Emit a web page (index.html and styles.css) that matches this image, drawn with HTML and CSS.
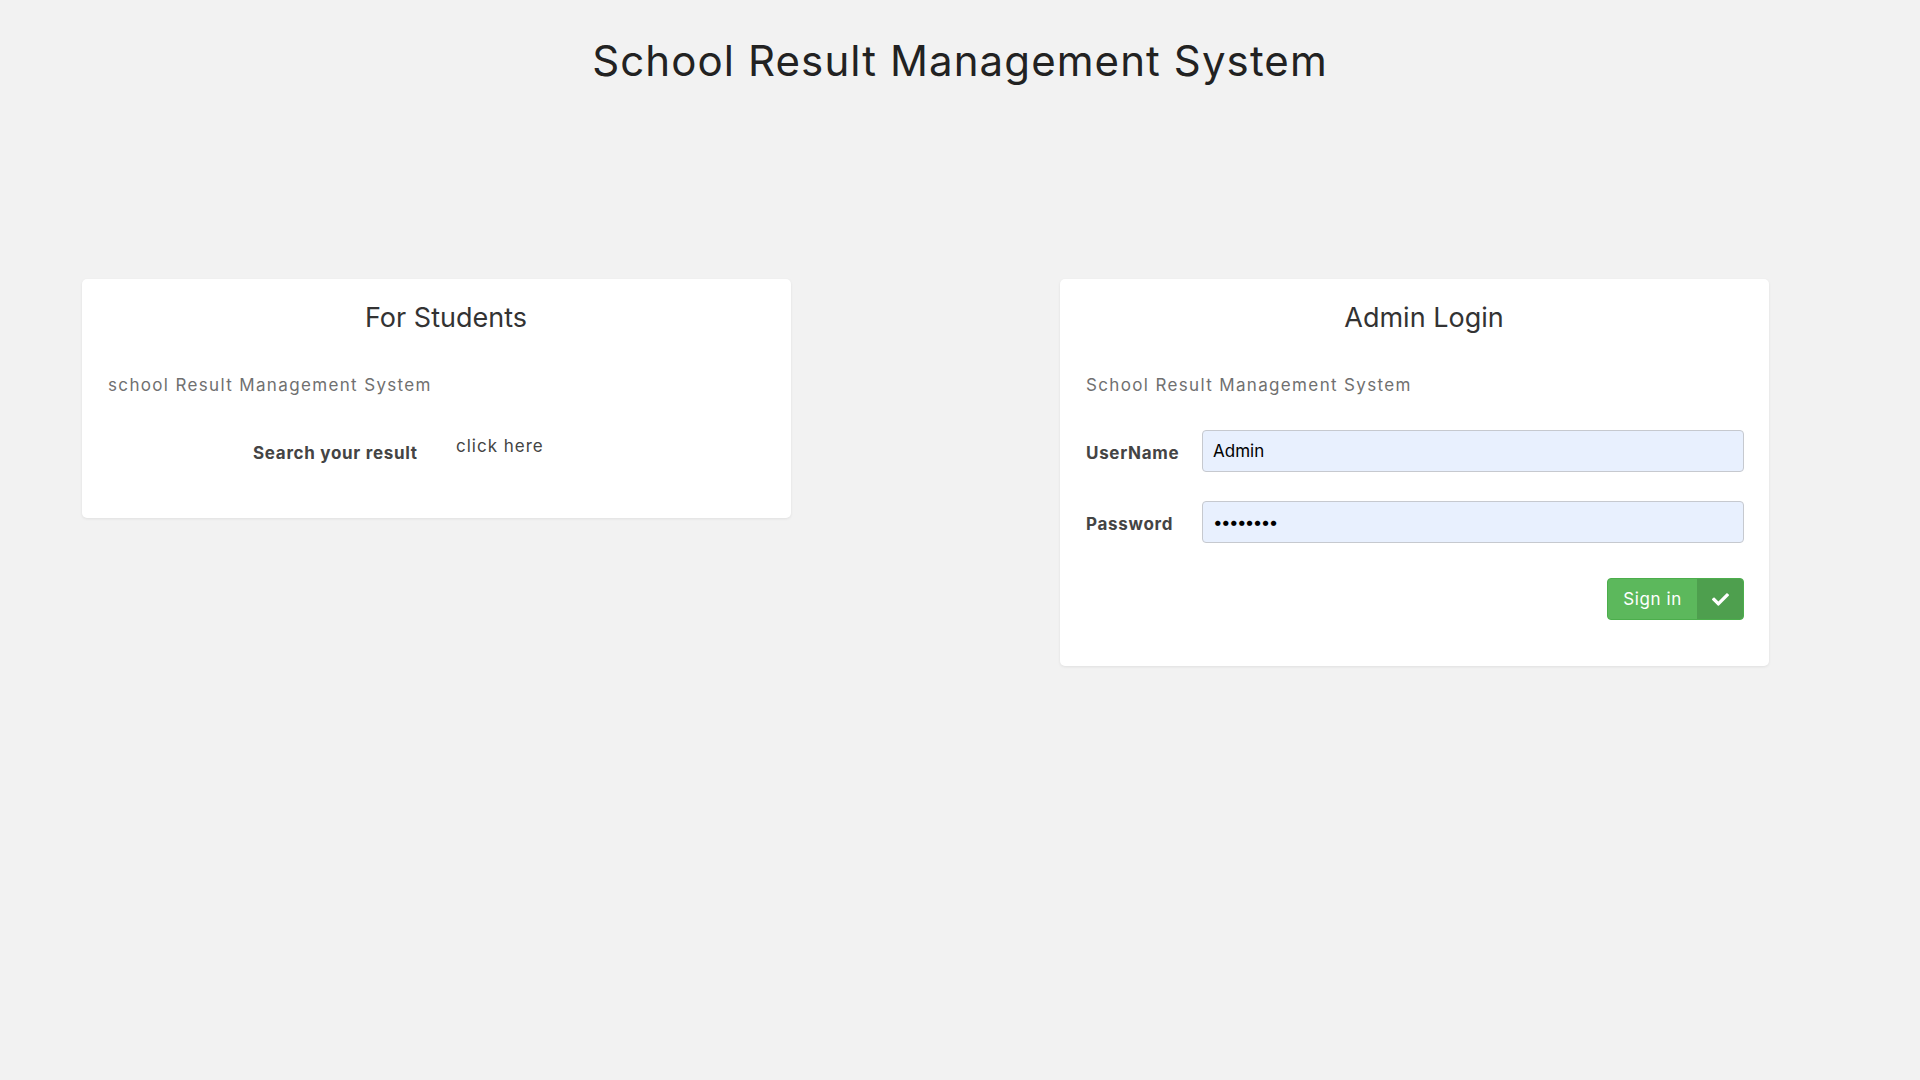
FILE: index.html
```html
<!DOCTYPE html>
<html lang="en">
<head>
<meta charset="utf-8">
<title>School Result Management System</title>
<link rel="stylesheet" href="styles.css">
</head>
<body>
<h1 class="page-title">School Result Management System</h1>
<div class="panels">
  <section class="card card-students">
    <h3 class="card-title">For Students</h3>
    <p class="card-sub">school Result Management System</p>
    <div class="search-row">
      <b class="search-label">Search your result</b>
      <a class="search-link" href="#">click here</a>
    </div>
  </section>
  <section class="card card-admin">
    <h3 class="card-title">Admin Login</h3>
    <p class="card-sub">School Result Management System</p>
    <form class="login-form">
      <div class="field">
        <label class="field-label" for="u">UserName</label>
        <input class="field-input" id="u" type="text" value="Admin">
      </div>
      <div class="field">
        <label class="field-label" for="p">Password</label>
        <input class="field-input field-password" id="p" type="password" value="password">
      </div>
      <div class="actions">
        <button class="btn-sign" type="button"><span class="btn-text">Sign in</span><span class="btn-icon"><svg width="17" height="13" viewBox="0 64 512 384" aria-hidden="true"><path fill="#fff" d="M173.898 439.404l-166.4-166.4c-9.997-9.997-9.997-26.206 0-36.204l36.203-36.204c9.997-9.998 26.207-9.998 36.204 0L192 312.69 432.095 72.596c9.997-9.997 26.207-9.997 36.204 0l36.203 36.204c9.997 9.997 9.997 26.206 0 36.204l-294.4 294.401c-9.998 9.997-26.207 9.997-36.204-.001z"/></svg></span></button>
      </div>
    </form>
  </section>
</div>
</body>
</html>
```
FILE: styles.css
```css
* { box-sizing: border-box; }
html, body { margin: 0; padding: 0; }
body {
  background: #f2f2f2;
  font-family: Inter, "Open Sans", sans-serif;
  color: #333;
  min-height: 1080px;
}
.page-title {
  margin: 36px 0 0;
  text-align: center;
  font-size: 42px;
  line-height: 50px;
  letter-spacing: 1.1px;
  font-weight: 400;
  color: #222;
}
.panels {
  display: flex;
  align-items: flex-start;
  gap: 269px;
  padding: 0 82px;
  margin-top: 193px;
}
.card {
  width: 709px;
  background: #fff;
  border-radius: 5px;
  box-shadow: 0 1px 3px rgba(0,0,0,0.08);
  padding: 22px 25px 46px 26px;
}
.card-students { padding-bottom: 53px; }
.card-title {
  margin: 0;
  padding-left: 18px;
  text-align: center;
  font-size: 27px;
  line-height: 34px;
  font-weight: 400;
  color: #333;
}
.card-sub {
  margin: 38px 0 0;
  font-size: 17px;
  line-height: 24px;
  letter-spacing: 1.35px;
  color: #707070;
}
.search-row {
  display: flex;
  align-items: flex-start;
  margin: 37px 0 0 145px;
}
.search-label {
  width: 203px;
  margin-top: 7px;
  font-size: 17px;
  line-height: 24px;
  letter-spacing: 0.7px;
  font-weight: 700;
  color: #444;
}
.search-link {
  font-size: 17px;
  line-height: 24px;
  letter-spacing: 1px;
  color: #444;
  text-decoration: none;
}
.login-form { margin-top: 33px; }
.field {
  display: flex;
  align-items: center;
  margin-bottom: 29px;
}
.field-label {
  width: 116px;
  flex: none;
  padding-top: 3px;
  font-size: 17px;
  letter-spacing: 0.7px;
  font-weight: 700;
  color: #444;
}
.field-input {
  flex: 1;
  height: 42px;
  border: 1px solid #c6c9cf;
  border-radius: 4px;
  background: #e8f0fe;
  padding: 0 10px;
  font-family: inherit;
  font-size: 17px;
  color: #000;
}
.field-password { letter-spacing: -1.6px; }
.actions {
  display: flex;
  justify-content: flex-end;
  margin-top: 35px;
}
.btn-sign {
  display: flex;
  height: 42px;
  padding: 0;
  border: 1px solid #4cae4c;
  border-radius: 4px;
  background: #5cb85c;
  overflow: hidden;
  font-family: inherit;
  cursor: pointer;
}
.btn-text {
  display: flex;
  align-items: center;
  justify-content: center;
  width: 89px;
  font-size: 17px;
  letter-spacing: 0.6px;
  color: #fff;
}
.btn-icon {
  display: flex;
  align-items: center;
  justify-content: center;
  width: 46px;
  background: #4e9f4e;
}
```
